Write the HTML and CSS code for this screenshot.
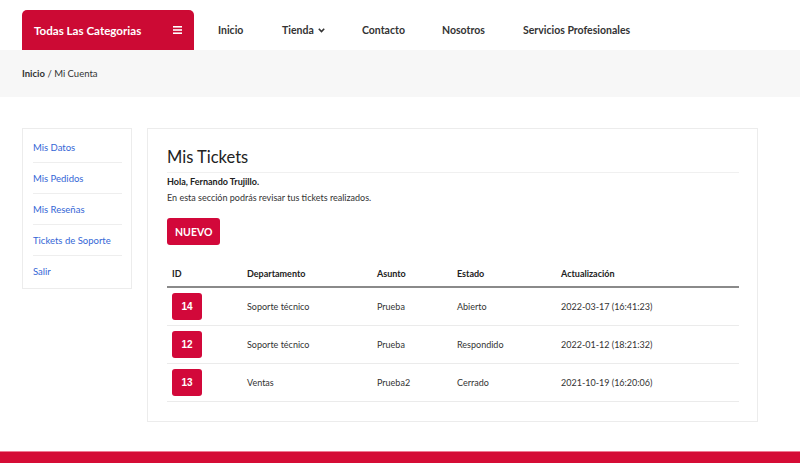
FILE: index.html
```html
<!DOCTYPE html>
<html lang="es">
<head>
<meta charset="utf-8">
<title>Mis Tickets</title>
<link rel="stylesheet" href="styles.css">
</head>
<body>
<header class="topbar">
  <div class="wrap topbar-inner">
    <div class="cats">
      <span>Todas Las Categorias</span>
      <svg class="burger" width="9" height="8" viewBox="0 0 9 8"><rect x="0" y="0" width="9" height="1.6" fill="#fff"/><rect x="0" y="3.2" width="9" height="1.6" fill="#fff"/><rect x="0" y="6.4" width="9" height="1.6" fill="#fff"/></svg>
    </div>
    <nav class="menu">
      <a class="m-inicio">Inicio</a>
      <a class="m-tienda">Tienda <svg class="chev" width="7" height="5" viewBox="0 0 7 5"><path d="M0.8 0.8 L3.5 3.6 L6.2 0.8" fill="none" stroke="#333" stroke-width="1.6"/></svg></a>
      <a class="m-contacto">Contacto</a>
      <a class="m-nosotros">Nosotros</a>
      <a>Servicios Profesionales</a>
    </nav>
  </div>
</header>
<div class="crumbs">
  <div class="wrap"><b>Inicio</b> / Mi Cuenta</div>
</div>
<main class="wrap content">
  <aside class="side">
    <a class="side-item">Mis Datos</a>
    <a class="side-item">Mis Pedidos</a>
    <a class="side-item">Mis Reseñas</a>
    <a class="side-item">Tickets de Soporte</a>
    <a class="side-item">Salir</a>
  </aside>
  <section class="card">
    <h1 class="title">Mis Tickets</h1>
    <p class="hello">Hola, Fernando Trujillo.</p>
    <p class="intro">En esta sección podrás revisar tus tickets realizados.</p>
    <button class="btn">NUEVO</button>
    <div class="table">
      <div class="row head">
        <div>ID</div><div>Departamento</div><div>Asunto</div><div>Estado</div><div>Actualización</div>
      </div>
      <div class="row">
        <div><span class="badge">14</span></div><div>Soporte técnico</div><div>Prueba</div><div>Abierto</div><div>2022-03-17 (16:41:23)</div>
      </div>
      <div class="row">
        <div><span class="badge">12</span></div><div>Soporte técnico</div><div>Prueba</div><div>Respondido</div><div>2022-01-12 (18:21:32)</div>
      </div>
      <div class="row">
        <div><span class="badge">13</span></div><div>Ventas</div><div>Prueba2</div><div>Cerrado</div><div>2021-10-19 (16:20:06)</div>
      </div>
    </div>
  </section>
</main>
<footer class="footer"></footer>
</body>
</html>
```
FILE: styles.css
```css
* { box-sizing: border-box; }
html, body { margin: 0; padding: 0; }
body {
  font-family: Lato, "Open Sans", sans-serif;
  color: #333;
  background: #fff;
  width: 800px;
  height: 463px;
  overflow: hidden;
}
.wrap { width: 736px; margin-left: 22px; }

.topbar { padding-top: 10px; }
.topbar-inner { display: flex; align-items: center; height: 40px; }
.cats {
  width: 172px; height: 40px;
  background: #cc0a34;
  border-radius: 5px 5px 0 0;
  color: #fff; font-weight: 700; font-size: 11.6px;
  display: flex; align-items: center; justify-content: space-between;
  padding: 0 12px 0 12px;
}
.burger { display: block; }
.menu { display: flex; align-items: center; margin-left: 24px; font-size: 10.5px; font-weight: 700; color: #333; }
.menu a { display: flex; align-items: center; gap: 4px; }
.m-inicio { width: 64px; }
.m-tienda { width: 80px; }
.m-contacto { width: 80px; }
.m-nosotros { width: 81px; }
.chev { display: block; margin-top: 1px; }

.crumbs {
  background: #f7f7f7; height: 47px;
  display: flex; align-items: center;
  font-size: 9.5px; color: #333;
}
.crumbs b { font-weight: 700; }

.content { display: flex; align-items: flex-start; gap: 15px; margin-top: 31px; }
.side {
  width: 110px;
  border: 1px solid #ececec;
  padding: 3px 9px 2px 10px;
  display: flex; flex-direction: column;
}
.side-item {
  height: 31px; display: flex; align-items: center;
  font-size: 9.5px; color: #3466d6;
  border-bottom: 1px solid #eee;
}
.side-item:last-child { border-bottom: none; height: 30px; }

.card {
  flex: 1;
  border: 1px solid #ececec;
  padding: 16px 18px 19px 19px;
}
.title {
  margin: 0; font-size: 16.5px; font-weight: 400; color: #222;
  line-height: 24px; padding-bottom: 3px;
  border-bottom: 1px solid #f0f0f0;
}
.hello { margin: 2px 0 0; font-size: 9px; font-weight: 700; line-height: 13px; color: #222; }
.intro { margin: 2px 0 0; font-size: 9px; line-height: 15px; color: #333; }
.btn {
  display: block; margin-top: 13px;
  height: 27px; padding: 0 8px;
  background: #d2083a; color: #fff; border: none; border-radius: 3px;
  font-family: Lato, sans-serif; font-weight: 700; font-size: 10.5px;
}
.table { margin-top: 15px; font-size: 9px; color: #333; }
.row {
  display: grid;
  grid-template-columns: 75px 130px 80px 104px 1fr;
  align-items: center;
  height: 38px;
  border-bottom: 1px solid #ebebeb;
}
.row > div { padding-left: 5px; }
.row.head {
  height: 28px; font-weight: 700; color: #222;
  border-bottom: 2px solid #8a8a8a;
  align-items: start; padding-top: 8px;
}
.badge {
  display: inline-flex; align-items: center; justify-content: center;
  width: 30px; height: 27px; border-radius: 3px;
  background: #d2083a; color: #fff;
  font-family: "Liberation Sans", Arial, sans-serif; font-weight: 700; font-size: 10px;
}
.footer {
  margin-top: 29px; height: 20px; background: #d50c35;
  border-top: 1px solid #f07a92;
}
```
